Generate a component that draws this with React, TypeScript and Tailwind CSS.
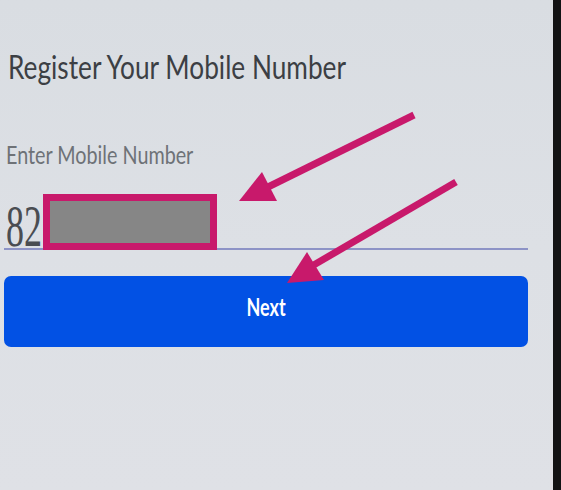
import React from "react";

export default function App() {
  return (
    <div className="relative w-[561px] h-[490px] overflow-hidden flex bg-[#dcdfe4]">
      <div className="flex-1 flex flex-col pl-[4px] pr-[25px] bg-gradient-to-b from-[#d9dde2] via-[#dde0e5] to-[#dfe1e6]">
        <div className="mt-[50px] ml-[4px] h-[33px] text-[33px] leading-none text-[#3c3f44] whitespace-nowrap" style={{ fontFamily: "Lato, 'Open Sans', sans-serif" }}>
          <span className="inline-block origin-left scale-x-[0.795]">Register Your Mobile Number</span>
        </div>
        <div className="mt-[59px] ml-[2px] h-[25px] text-[25px] leading-none text-[#6e7277] whitespace-nowrap" style={{ fontFamily: "Lato, 'Open Sans', sans-serif" }}>
          <span className="inline-block origin-left scale-x-[0.79]">Enter Mobile Number</span>
        </div>
        <div className="mt-[27px] h-[56px] flex items-end border-b-2 border-[#8d93c6]">
          <div className="w-[37px] ml-[2px] -mb-[8px] h-[60px] text-[60px] leading-none text-[#4a4d52] whitespace-nowrap" style={{ fontFamily: "'Liberation Serif', serif" }}>
            <span className="inline-block origin-left scale-x-[0.6]">82</span>
          </div>
          <div className="w-[174px] h-[56px] -mb-[2px] border-[7px] border-[#c8196b] bg-[#868686]" />
        </div>
        <button className="mt-[26px] h-[71px] w-full rounded-[7px] bg-[#0251e4] flex items-center justify-center pb-[10px] text-white text-[24px] font-bold leading-none" style={{ fontFamily: "Lato, 'Open Sans', sans-serif" }}>
          <span className="inline-block scale-x-[0.75]">Next</span>
        </button>
      </div>
      <div className="w-[8px] bg-[#121314]" />
      <svg className="absolute inset-0 pointer-events-none" width="561" height="490" viewBox="0 0 561 490">
        <line x1="414" y1="115" x2="268" y2="187" stroke="#c8196b" strokeWidth="7" />
        <polygon points="239,201 262,172 277,201" fill="#c8196b" />
        <line x1="456" y1="182" x2="312" y2="266" stroke="#c8196b" strokeWidth="7" />
        <polygon points="287,283 307,252 324,280" fill="#c8196b" />
      </svg>
    </div>
  );
}
